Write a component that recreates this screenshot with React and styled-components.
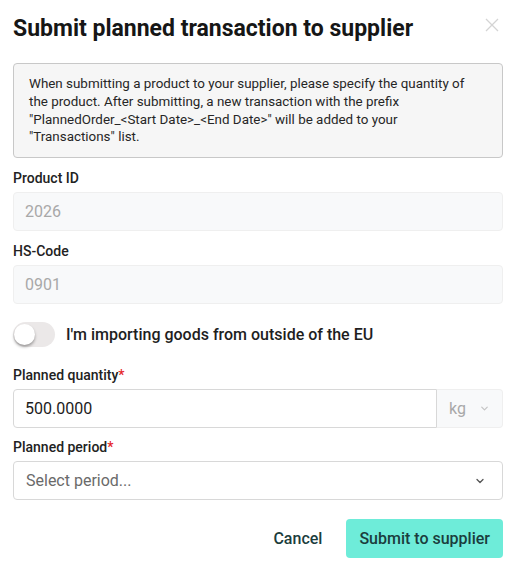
import React, { useState } from "react";
import styled, { createGlobalStyle } from "styled-components";

const GlobalStyle = createGlobalStyle`
    html, body {
        margin: 0;
        padding: 0;
        background: #fff;
    }
    body {
        font-family: Roboto, "Noto Sans", sans-serif;
        color: #161616;
    }
    * {
        box-sizing: border-box;
    }
`

const Dialog = styled.div`
    width: 517px;
    padding: 14px 14px 16px 13px;
`

const Header = styled.div`
    display: flex;
    align-items: center;
    justify-content: space-between;
    height: 30px;
`

const Title = styled.h1`
    margin: 0;
    font-size: 23px;
    line-height: 30px;
    font-weight: 700;
    color: #161616;
`

const CloseButton = styled.button`
    align-self: flex-start;
    border: none;
    background: none;
    padding: 0;
    margin: 4px 4px 0 0;
    width: 14px;
    height: 14px;
    display: flex;
    align-items: center;
    justify-content: center;
    cursor: pointer;
`

const InfoBox = styled.div`
    margin-top: 19px;
    border: 1px solid #c8c8c8;
    border-radius: 4px;
    background: #f6f6f6;
    padding: 11px 16px 11px 15px;
    font-size: 13.4px;
    line-height: 17.8px;
    color: #262626;
`

const Field = styled.div`
    margin-top: ${props => props.gap || 11}px;
`

const Label = styled.label`
    display: block;
    font-size: 14px;
    font-weight: 500;
    color: #222;
    margin-bottom: 5px;
    line-height: 18px;
`

const Required = styled.span`
    color: #e5262a;
`

const Input = styled.input`
    display: block;
    width: 100%;
    height: 39px;
    border: 1px solid ${props => props.disabled ? "#efefef" : "#d8d8d8"};
    border-radius: 4px;
    background: ${props => props.disabled ? "#f8f9fa" : "#fff"};
    padding: 0 11px;
    font-family: inherit;
    font-size: 16px;
    color: ${props => props.disabled ? "#a8a8a8" : "#1c1c1c"};
    -webkit-text-fill-color: ${props => props.disabled ? "#a8a8a8" : "#1c1c1c"};
    outline: none;
`

const InputGroup = styled.div`
    display: flex;
    height: 39px;

    ${Input} {
        flex: 1;
        border-radius: 4px 0 0 4px;
    }
`

const Addon = styled.div`
    width: 66px;
    display: flex;
    align-items: center;
    gap: 13px;
    padding-left: 12px;
    background: #f8f9fa;
    border: 1px solid #efefef;
    border-left: none;
    border-radius: 0 4px 4px 0;
    font-size: 16px;
    color: #a8a8a8;
`

const ToggleRow = styled.div`
    display: flex;
    align-items: center;
    gap: 11px;
    margin-top: 18px;
    height: 25px;
`

const Track = styled.button`
    position: relative;
    width: 42px;
    height: 25px;
    border: none;
    border-radius: 13px;
    background: ${props => props.on ? "#6eecd9" : "#ebe8e8"};
    padding: 0;
    cursor: pointer;
`

const Knob = styled.span`
    position: absolute;
    top: 2px;
    left: ${props => props.on ? "19px" : "1px"};
    width: 21px;
    height: 21px;
    border-radius: 50%;
    background: #fff;
    box-shadow: 0 2px 3px rgba(0, 0, 0, 0.35);
`

const ToggleLabel = styled.span`
    font-size: 16px;
    line-height: 20px;
    font-weight: 500;
    color: #1e1e1e;
`

const Select = styled.div`
    height: 39px;
    display: flex;
    align-items: center;
    justify-content: space-between;
    border: 1px solid #d8d8d8;
    border-radius: 4px;
    padding: 0 16px 0 12px;
    font-size: 16px;
    color: #6a6a6a;
`

const Footer = styled.div`
    display: flex;
    justify-content: flex-end;
    align-items: center;
    gap: 24px;
    margin-top: 19px;
`

const TextButton = styled.button`
    border: none;
    background: none;
    font-family: inherit;
    font-size: 16px;
    font-weight: 500;
    color: #1b3d3d;
    padding: 0;
    cursor: pointer;
`

const PrimaryButton = styled.button`
    height: 39px;
    padding: 0 13px;
    border: none;
    border-radius: 4px;
    background: #6eecd9;
    font-family: inherit;
    font-size: 16px;
    font-weight: 500;
    color: #1b3d3d;
    cursor: pointer;
`

function Chevron({ color = "#777", size = 12 }) {
    return (
        <svg width={size} height={size} viewBox="0 0 12 12" fill="none">
            <path d="M3 4.5L6 7.5L9 4.5" stroke={color} strokeWidth="1.3" strokeLinecap="round" strokeLinejoin="round" />
        </svg>
    )
}

export default function App() {
    const [importing, setImporting] = useState(false)
    const [quantity, setQuantity] = useState("500.0000")

    return (
        <Dialog>
            <GlobalStyle />
            <Header>
                <Title>Submit planned transaction to supplier</Title>
                <CloseButton aria-label="Close">
                    <svg width="14" height="14" viewBox="0 0 14 14">
                        <path d="M1 1L13 13M13 1L1 13" stroke="#d4d4d4" strokeWidth="1.3" />
                    </svg>
                </CloseButton>
            </Header>

            <InfoBox>
                When submitting a product to your supplier, please specify the quantity of
                the product. After submitting, a new transaction with the prefix
                "PlannedOrder_&lt;Start Date&gt;_&lt;End Date&gt;" will be added to your
                "Transactions" list.
            </InfoBox>

            <Field gap={11}>
                <Label>Product ID</Label>
                <Input value="2026" disabled readOnly />
            </Field>

            <Field>
                <Label>HS-Code</Label>
                <Input value="0901" disabled readOnly />
            </Field>

            <ToggleRow>
                <Track on={importing} onClick={() => setImporting(!importing)}>
                    <Knob on={importing} />
                </Track>
                <ToggleLabel>I'm importing goods from outside of the EU</ToggleLabel>
            </ToggleRow>

            <Field gap={19}>
                <Label>Planned quantity<Required>*</Required></Label>
                <InputGroup>
                    <Input value={quantity} onChange={e => setQuantity(e.target.value)} />
                    <Addon>
                        kg
                        <Chevron color="#c4c4c4" size={11} />
                    </Addon>
                </InputGroup>
            </Field>

            <Field gap={10}>
                <Label>Planned period<Required>*</Required></Label>
                <Select>
                    Select period...
                    <Chevron color="#555" />
                </Select>
            </Field>

            <Footer>
                <TextButton>Cancel</TextButton>
                <PrimaryButton>Submit to supplier</PrimaryButton>
            </Footer>
        </Dialog>
    )
}
